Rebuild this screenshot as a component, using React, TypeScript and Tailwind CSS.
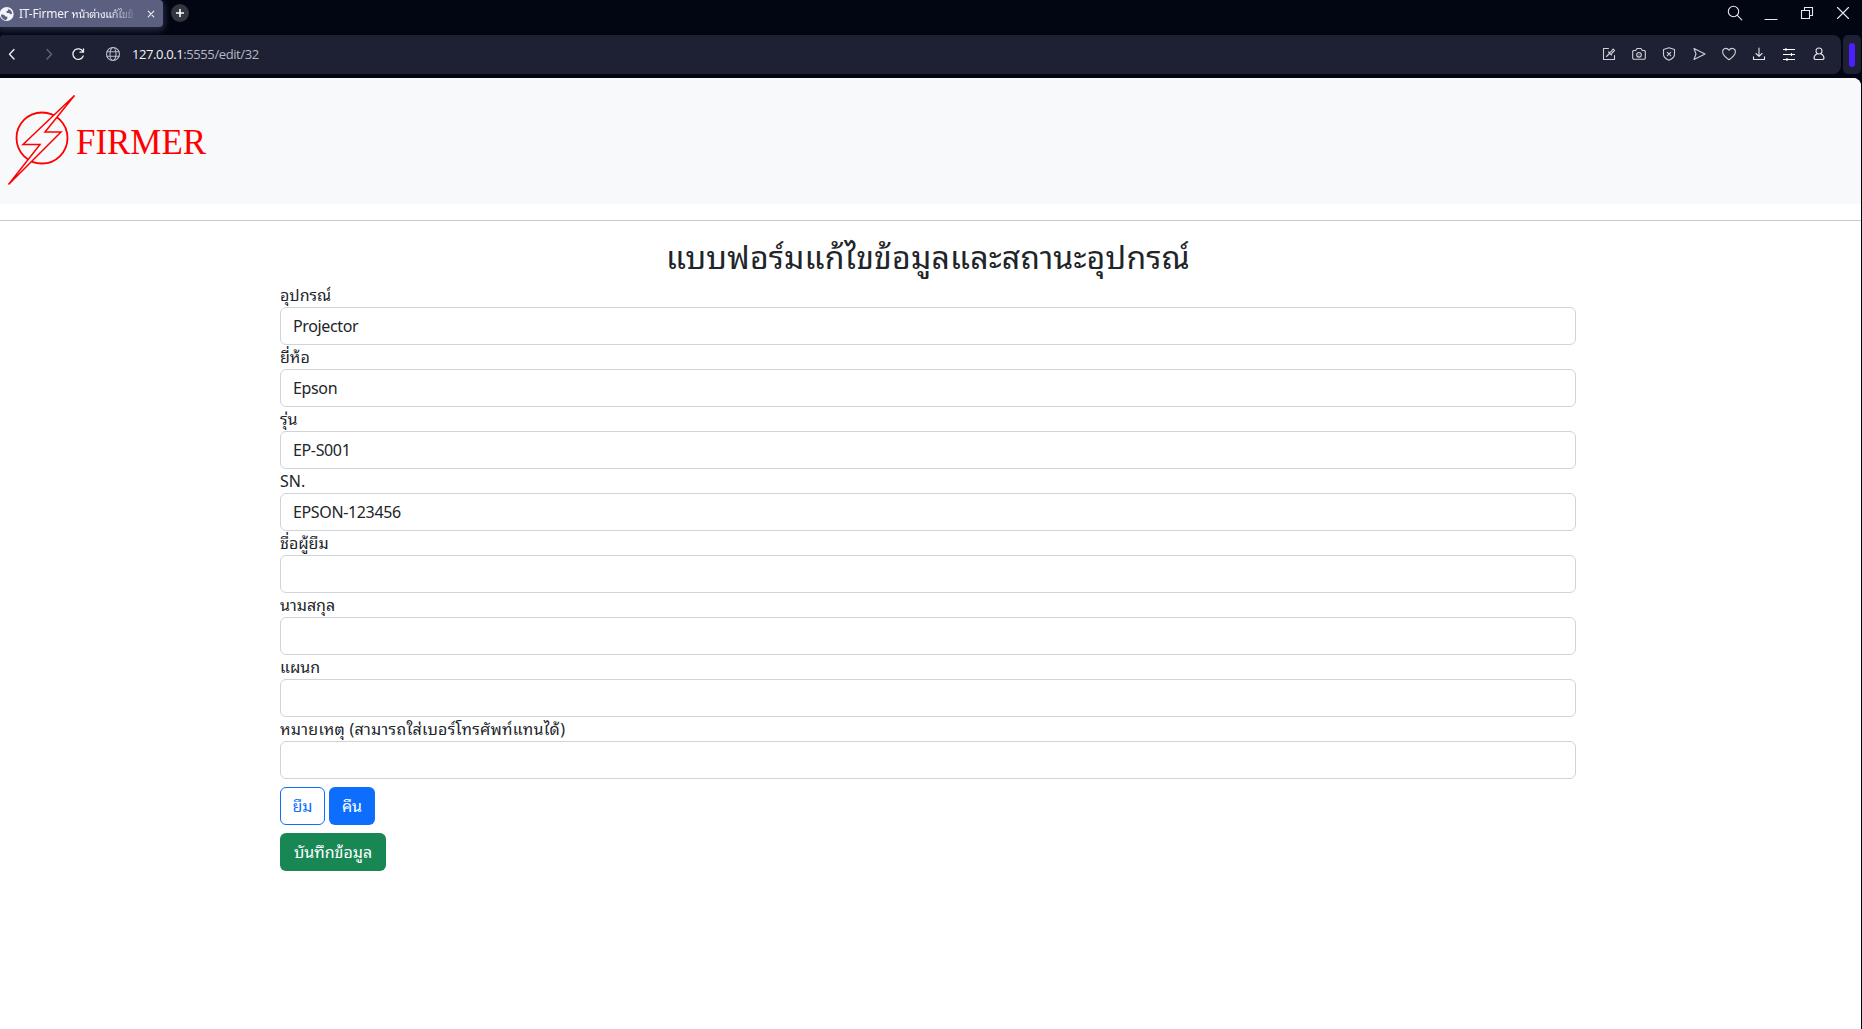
import type { ReactNode } from 'react';

const THAI = 'font-["Noto_Sans","Noto_Sans_Thai_Looped","Loma","Waree","Garuda","Umpush","Noto_Sans_Thai",sans-serif]';

function Icon({ children, className = '', size = 14 }: { children: ReactNode; className?: string; size?: number }) {
  return (
    <svg width={size} height={size} viewBox={`0 0 ${size} ${size}`} fill="none" stroke="currentColor" strokeWidth="1.1" strokeLinecap="round" strokeLinejoin="round" className={`shrink-0 ${className}`}>
      {children}
    </svg>
  );
}

function TabBar() {
  return (
    <div className="flex h-[35px] items-start bg-[#020512]">
      <div className="flex h-[27px] w-[163px] shrink-0 items-center rounded-r-[4px] bg-[#5b5f80] text-[#f1f2f8] shadow-[0_2px_6px_2px_rgba(91,95,128,0.4)]">
        <svg width="14" height="14" viewBox="0 0 14 14" className="shrink-0">
          <circle cx="6.7" cy="7" r="7" fill="#f4f5fa" />
          <path d="M1 7.5l3 .3 1.5 1.7 2 .2-.4 2.3-1.6 1.2C2.5 12.5.8 10 1 7.5zM6 1.5l2.5.3L8 3.5 6.3 4.5l.2 1.3 3 .4 1.5 1.3 1-1C12 4 9.5 1.5 6 1.5z" fill="#5b5f80" />
        </svg>
        <div className="ml-[5px] w-[120px] overflow-hidden whitespace-nowrap text-[12px] leading-[26px] [mask-image:linear-gradient(to_right,black_75%,transparent_100%)]">
          <span className="tracking-[-0.2px]">IT-Firmer </span><span className="text-[11px] tracking-[-0.35px]">หน้าต่างแก้ไขข้</span>
        </div>
        <Icon size={8} className="ml-[8px]"><path d="M1.2 1.2l5.6 5.6M6.8 1.2L1.2 6.8" /></Icon>
      </div>
      <div className="mt-1 ml-2 flex size-[18px] items-center justify-center rounded-full bg-[#33353f] text-white">
        <svg width="8" height="8" viewBox="0 0 8 8" stroke="currentColor" strokeWidth="1.6"><path d="M4 0v8M0 4h8" /></svg>
      </div>
      <div className="mt-[5px] mr-[12px] ml-auto flex items-center text-[#e8e9ef]">
        <Icon size={16}><circle cx="6.5" cy="6.5" r="5.2" /><path d="M10.3 10.3l4.5 4.5" /></Icon>
        <Icon size={14} className="ml-[21px]"><path d="M1 13.5h12" /></Icon>
        <Icon size={14} className="ml-[22px]"><path d="M1.5 4.5h8v8h-8zM4.5 4.5v-3h8v8h-3" strokeLinejoin="miter" /></Icon>
        <Icon size={14} className="ml-[22px]"><path d="M1.5 1.5l11 11M12.5 1.5l-11 11" /></Icon>
      </div>
    </div>
  );
}

function Toolbar() {
  return (
    <div className="flex h-[43px] items-start gap-[2px] bg-[#020512]">
      <div className="flex h-[39px] w-[1841px] shrink-0 items-center rounded-tl-[3px] rounded-r-[8px] bg-[#1e2133] pb-px text-[#eceef4]">
        <Icon className="ml-[5px]"><path d="M9 2.5L4.5 7.2 9 12" strokeWidth="1.4" /></Icon>
        <Icon className="ml-[23px] text-[#62667a]"><path d="M5 2.5L9.5 7.2 5 12" strokeWidth="1.4" /></Icon>
        <Icon className="ml-[15px]"><path d="M12 4.8A5.3 5.3 0 1 0 12.2 9M12.5 1.8v3.4H9" strokeWidth="1.3" /></Icon>
        <Icon size={16} className="ml-[20px] text-[#b9bdca]"><circle cx="8" cy="8" r="6.5" /><ellipse cx="8" cy="8" rx="3" ry="6.5" /><path d="M2 5.7h12M2 10.3h12" /></Icon>
        <div className="ml-[11px] pt-0.5 font-['Open_Sans',sans-serif] text-[13px] tracking-[-0.4px] text-[#b3b9c8]">
          <span className="text-[#f4f5f8]">127.0.0.1</span>:5555/edit/32
        </div>
        <div className="mr-[15px] ml-auto flex items-center gap-[16px] text-[#cdd0d6]">
          <Icon><path d="M6.5 1.5H1.5v11h11V8.5M4.5 9.5l3-3M6.5 5l3 3M7.3 5.7l2-1.2L11 2l1.5 1.5-2 2-1.2 2" /></Icon>
          <Icon><path d="M.7 4.3l1-.8h2l1.3-2h4l1.3 2h2l1 .8v7l-1 1h-10.6l-1-1z" /><circle cx="7" cy="7.8" r="2.3" /><path d="M7 7.8h.1" /></Icon>
          <Icon><path d="M7 .8L12.5 2.5v5c0 2.5-2.5 4.5-5.5 5.7C4 12 1.5 10 1.5 7.5v-5zM5.3 5.3l3.4 3.4M8.7 5.3L5.3 8.7" /></Icon>
          <Icon><path d="M2 1.5L13 7 2 12.5 4 7z" /></Icon>
          <Icon><path d="M7 12.8C3 10 .6 7.5.6 4.7.6 1 5.2.2 7 3.3 8.8.2 13.4 1 13.4 4.7 13.4 7.5 11 10 7 12.8z" /></Icon>
          <Icon className="text-[#e2e4ea]"><path d="M7 1v8M4 6.5L7 9.3l3-2.8M1.5 9.8v2.7h11V9.8" /></Icon>
          <Icon className="text-white"><path d="M1 2.5h12M1 7.5h12M1 12.5h12M4 1v3M9.5 6v3M5 11v3" strokeLinecap="butt" /></Icon>
          <Icon className="text-[#e2e4ea]"><circle cx="7" cy="4" r="3" /><path d="M4.8 7C3 7.8 2 9.5 2 11.5l1 1h8l1-1C12 9.5 11 7.8 9.2 7" /></Icon>
        </div>
      </div>
      <div className="flex h-[39px] w-[18px] items-center justify-center rounded-[5px] bg-[#1e2133]">
        <div className="h-6 w-[6px] rounded-full bg-[#4c1fff]" />
      </div>
    </div>
  );
}

function Logo() {
  return (
    <svg width="215" height="102" viewBox="0 0 215 102" fill="none" stroke="#ff0000" strokeWidth="1.5" className="mt-3">
      <circle cx="42" cy="48" r="25.5" strokeWidth="1.8" />
      <path d="M74.5 5.5L23 54.5H40L8.5 94.500 61 42H45z" fill="#f8f9fb" />
      <text x="76" y="63.5" fill="#ff0000" stroke="none" fontSize="35" textLength="130" lengthAdjust="spacingAndGlyphs" className="font-['Liberation_Serif',serif]">FIRMER</text>
    </svg>
  );
}

const FIELDS = [
  { label: 'อุปกรณ์', value: 'Projector' },
  { label: 'ยี่ห้อ', value: 'Epson' },
  { label: 'รุ่น', value: 'EP-S001' },
  { label: 'SN.', value: 'EPSON-123456' },
  { label: 'ชื่อผู้ยืม', value: '' },
  { label: 'นามสกุล', value: '' },
  { label: 'แผนก', value: '' },
  { label: 'หมายเหตุ (สามารถใส่เบอร์โทรศัพท์แทนได้)', value: '', spacing: 'tracking-[0.28px]' },
];

export default function App() {
  return (
    <div className={`flex h-[1029px] flex-col overflow-hidden bg-[#020512] ${THAI}`}>
      <TabBar />
      <Toolbar />
      <div className="mr-px flex-1 overflow-hidden rounded-tr-[8px] bg-white text-[16px] leading-6 text-[#212529]">
        <header className="flex h-[126px] items-start bg-[#f8f9fb]"><Logo /></header>
        <hr className="mt-4 border-[#c8c9ca]" />
        <main className="ml-[280px] w-[1296px] pt-[17px]">
          <h2 className="mb-[7px] text-center text-[32px] leading-[38.4px] font-normal tracking-[0.2px]">แบบฟอร์มแก้ไขข้อมูลและสถานะอุปกรณ์</h2>
          {FIELDS.map((f) => (
            <label key={f.label} className="block">
              <span className={`block h-6 whitespace-nowrap ${f.spacing ?? ''}`}>{f.label}</span>
              <input defaultValue={f.value} className="block h-[38px] w-full rounded-[6px] border border-[#ced4da] bg-white px-3 tracking-[-0.36px]" />
            </label>
          ))}
          <div className="mt-2 flex gap-1">
            <button className="h-[38px] w-[45px] rounded-[6px] border border-[#0d6efd] text-[#0d6efd]">ยืม</button>
            <button className="h-[38px] w-[46px] rounded-[6px] bg-[#0d6efd] text-white">คืน</button>
          </div>
          <button className="mt-2 block h-[38px] w-[106px] rounded-[6px] bg-[#198754] text-white">บันทึกข้อมูล</button>
        </main>
      </div>
    </div>
  );
}
